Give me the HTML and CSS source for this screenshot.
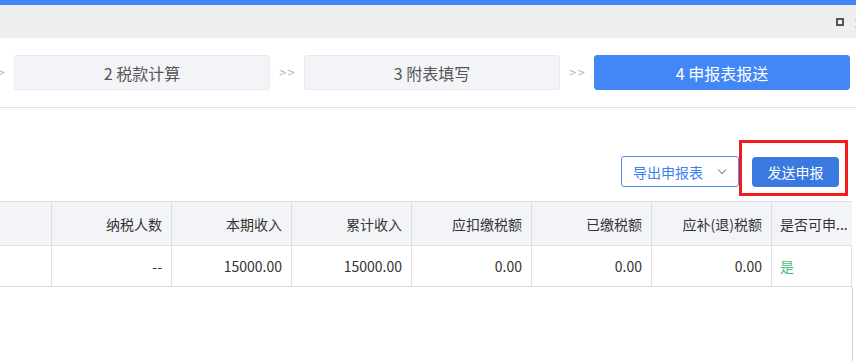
FILE: index.html
```html
<!DOCTYPE html>
<html lang="zh-CN">
  <head>
    <meta charset="UTF-8" />
    <meta name="viewport" content="width=device-width, initial-scale=1.0" />
    <title>申报表报送</title>
    <link rel="stylesheet" href="styles.css">
  </head>

  <body>
    <div class="topbar"></div>
    <div class="titlebar">
      <span class="win-max"></span>
      <span class="win-close">×</span>
    </div>

    <div class="steps">
      <div class="step">1 报表填写</div>
      <span class="step-arrow">&gt;&gt;</span>
      <div class="step">2 税款计算</div>
      <span class="step-arrow">&gt;&gt;</span>
      <div class="step">3 附表填写</div>
      <span class="step-arrow">&gt;&gt;</span>
      <div class="step active">4 申报表报送</div>
    </div>

    <div class="toolbar">
      <button class="btn-export">导出申报表 <span class="chevron"></span></button>
      <div class="highlight">
        <button class="btn-send">发送申报</button>
      </div>
    </div>

    <div class="table">
      <div class="cell head"></div>
      <div class="cell head num">纳税人数</div>
      <div class="cell head num">本期收入</div>
      <div class="cell head num">累计收入</div>
      <div class="cell head num">应扣缴税额</div>
      <div class="cell head num">已缴税额</div>
      <div class="cell head num">应补(退)税额</div>
      <div class="cell head">是否可申...</div>

      <div class="cell"></div>
      <div class="cell num">--</div>
      <div class="cell num">15000.00</div>
      <div class="cell num">15000.00</div>
      <div class="cell num">0.00</div>
      <div class="cell num">0.00</div>
      <div class="cell num">0.00</div>
      <div class="cell yes">是</div>
    </div>
    <div class="table-rest"></div>
  </body>
</html>
```

FILE: styles.css
```css
* {
  margin: 0;
  padding: 0;
  box-sizing: border-box;
}

html,
body {
  height: 100%;
  overflow: hidden;
}

body {
  font-family: "Noto Sans CJK SC", "Noto Sans", sans-serif;
  color: #333;
  background-color: #fff;
}

.topbar {
  height: 5px;
  background-color: #4286f4;
}

.titlebar {
  height: 33px;
  background-color: #efefef;
  display: flex;
  justify-content: flex-end;
  align-items: center;
  overflow: hidden;
}

.win-max {
  width: 8px;
  height: 8px;
  border: 2px solid #555;
  margin-right: 9px;
}

.win-close {
  width: 3px;
  overflow: hidden;
  font-size: 14px;
  line-height: 14px;
  color: #555;
  font-weight: bold;
}

.steps {
  display: flex;
  align-items: center;
  margin-left: -276px;
  padding: 17px 0;
  border-bottom: 1px solid #e2e2e2;
}

.step {
  flex: 0 0 256px;
  height: 35px;
  display: flex;
  align-items: center;
  justify-content: center;
  background-color: #f3f4f8;
  border: 1px solid #e7e9ee;
  border-radius: 3px;
  font-size: 16px;
  color: #555;
}

.step.active {
  background-color: #4287f5;
  border-color: #4287f5;
  color: #fff;
}

.step-arrow {
  flex: 0 0 34px;
  text-align: center;
  font-family: "DejaVu Sans", sans-serif;
  font-size: 10px;
  color: #b5b5b5;
}

.toolbar {
  display: flex;
  justify-content: flex-end;
  align-items: flex-start;
  padding: 32px 8px 0 0;
}

.btn-export {
  margin-top: 16px;
  width: 118px;
  height: 31px;
  display: flex;
  align-items: center;
  padding-left: 11px;
  background-color: #fff;
  border: 1px solid #4b8cf5;
  border-radius: 3px;
  font-family: inherit;
  font-size: 14px;
  color: #3c7ff0;
}

.chevron {
  width: 6px;
  height: 6px;
  margin-left: 16px;
  margin-top: -4px;
  border-right: 1px solid #8a8a8a;
  border-bottom: 1px solid #8a8a8a;
  transform: rotate(45deg);
}

.highlight {
  border: 3px solid #f21c1c;
  padding: 14px 6px 6px 10px;
}

.btn-send {
  width: 87px;
  height: 30px;
  background-color: #3a79e0;
  border: none;
  border-radius: 4px;
  font-family: inherit;
  font-size: 14px;
  color: #fff;
}

.table {
  margin-top: 5px;
  display: grid;
  grid-template-columns: 51px repeat(6, 120px) 81px;
  width: 852px;
  border-top: 1px solid #dcdfe6;
  border-right: 1px solid #dcdfe6;
}

.cell {
  height: 41px;
  display: flex;
  align-items: center;
  padding: 0 9px 0 8px;
  font-size: 14px;
  color: #333;
  border-bottom: 1px solid #dcdfe6;
  border-left: 1px solid #dcdfe6;
  white-space: nowrap;
  overflow: hidden;
}

.cell:nth-child(8n + 1) {
  border-left: none;
}

.cell.head {
  height: 44px;
  background-color: #f3f4f8;
}

.cell.num {
  justify-content: flex-end;
}

.cell.yes {
  color: #45c281;
}

.table-rest {
  width: 853px;
  height: 80px;
  border-right: 1px solid #d0d0d0;
}
```
